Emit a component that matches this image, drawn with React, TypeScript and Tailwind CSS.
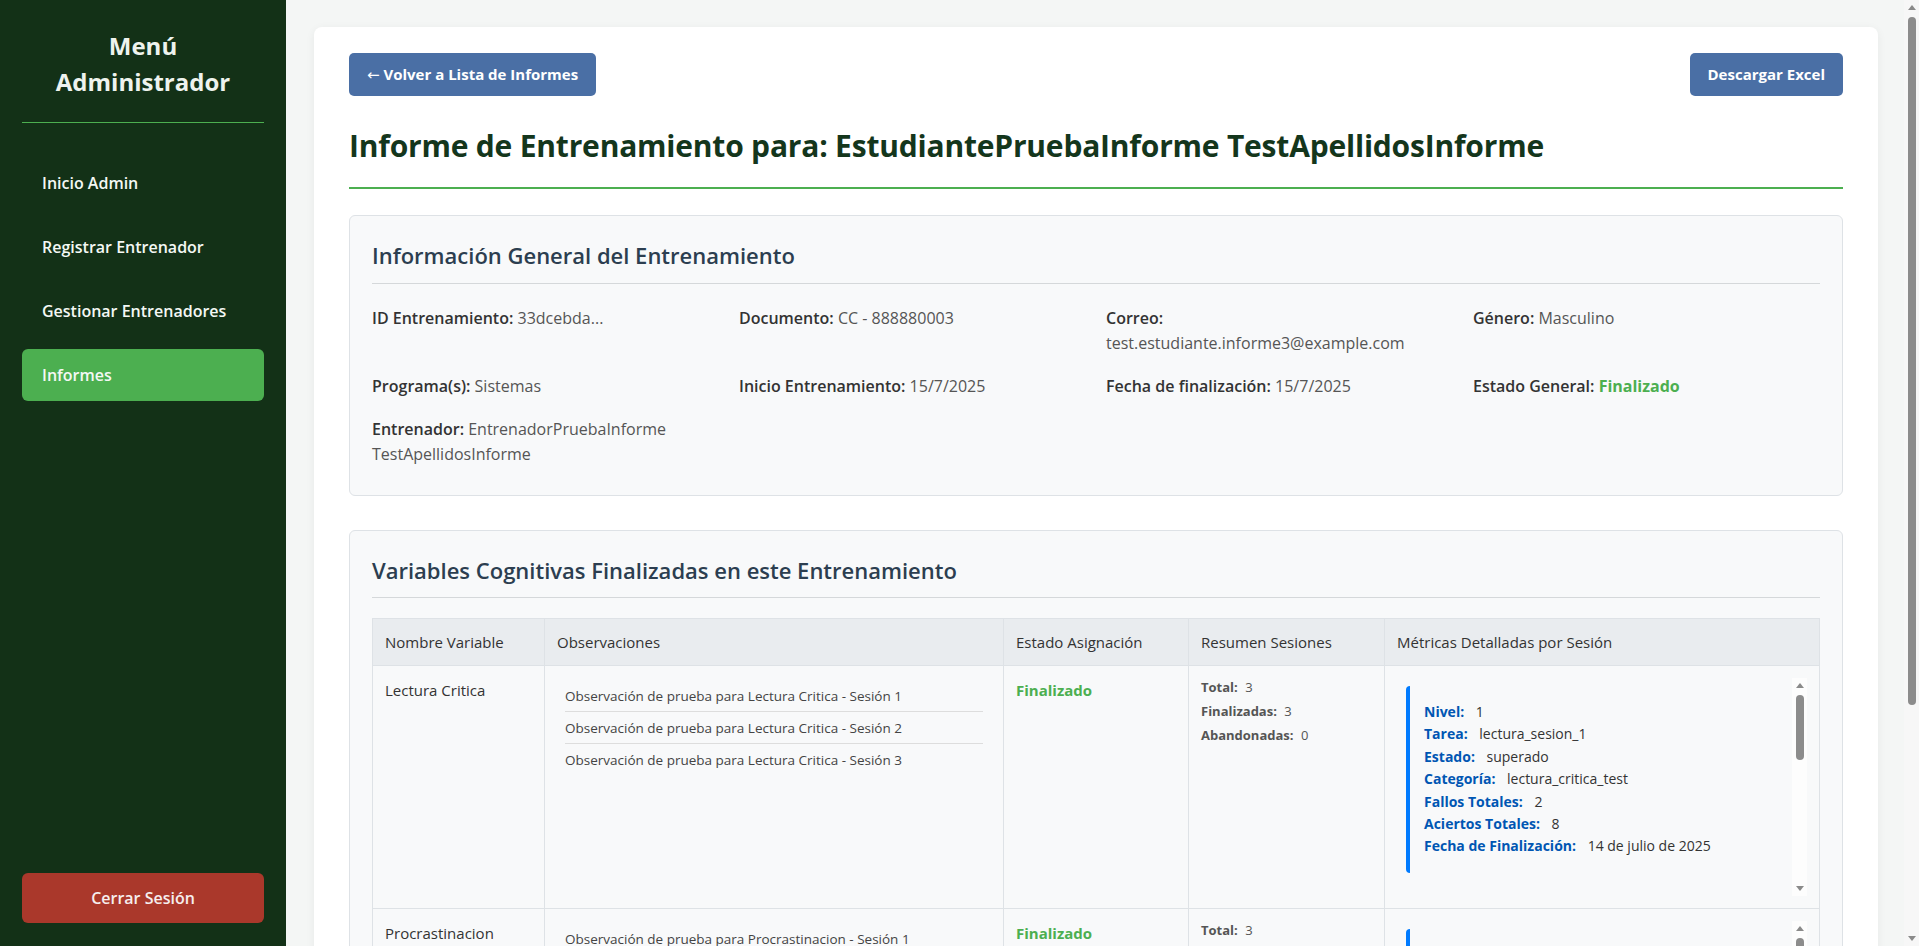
import React from 'react';

type Session = {
  nivel: string;
  tarea: string;
  estado: string;
  categoria: string;
  fallos: string;
  aciertos: string;
  fecha: string;
};

type Variable = {
  nombre: string;
  observaciones: string[];
  estado: string;
  total: number;
  finalizadas: number;
  abandonadas: number;
  sesion: Session;
};

const navItems = ['Inicio Admin', 'Registrar Entrenador', 'Gestionar Entrenadores', 'Informes'];

const variables: Variable[] = [
  {
    nombre: 'Lectura Critica',
    observaciones: [
      'Observación de prueba para Lectura Critica - Sesión 1',
      'Observación de prueba para Lectura Critica - Sesión 2',
      'Observación de prueba para Lectura Critica - Sesión 3',
    ],
    estado: 'Finalizado',
    total: 3,
    finalizadas: 3,
    abandonadas: 0,
    sesion: {
      nivel: '1',
      tarea: 'lectura_sesion_1',
      estado: 'superado',
      categoria: 'lectura_critica_test',
      fallos: '2',
      aciertos: '8',
      fecha: '14 de julio de 2025',
    },
  },
  {
    nombre: 'Procrastinacion',
    observaciones: [
      'Observación de prueba para Procrastinacion - Sesión 1',
      'Observación de prueba para Procrastinacion - Sesión 2',
      'Observación de prueba para Procrastinacion - Sesión 3',
    ],
    estado: 'Finalizado',
    total: 3,
    finalizadas: 3,
    abandonadas: 0,
    sesion: {
      nivel: '1',
      tarea: 'procrastinacion_sesion_1',
      estado: 'superado',
      categoria: 'procrastinacion_test',
      fallos: '3',
      aciertos: '7',
      fecha: '14 de julio de 2025',
    },
  },
];

// fake scrollbar (the headless browser hides the real ones)
function ScrollBar({ track, thumbTop, thumbHeight }: { track: string; thumbTop: number; thumbHeight: number }) {
  return (
    <div className={`w-[15px] shrink-0 h-full flex flex-col ${track}`}>
      <div className="h-[15px] flex items-center justify-center">
        <div className="w-0 h-0 border-x-[4px] border-x-transparent border-b-[5px] border-b-[#8a8a8a]" />
      </div>
      <div className="flex-1">
        <div className="w-[8px] mx-auto rounded-full bg-[#8c8c8c]" style={{ marginTop: thumbTop, height: thumbHeight }} />
      </div>
      <div className="h-[15px] flex items-center justify-center">
        <div className="w-0 h-0 border-x-[4px] border-x-transparent border-t-[5px] border-t-[#8a8a8a]" />
      </div>
    </div>
  );
}

function Sidebar() {
  return (
    <aside className="w-[286px] shrink-0 h-full bg-[#133117] flex flex-col px-[22px] pt-[28px] pb-[23px]">
      <h2 className="text-center text-[24px] leading-[36px] font-bold text-[#eef3ee] pb-[22px] border-b border-[#4caf50]">
        Menú
        <br />
        Administrador
      </h2>
      <nav className="mt-[34px] flex flex-col gap-[12px]">
        {navItems.map((item) => (
          <a
            key={item}
            href="#"
            className={
              item === 'Informes'
                ? 'h-[52px] flex items-center px-[20px] rounded-[6px] bg-[#4caf50] text-[16px] font-semibold text-[#f4f8f4]'
                : 'h-[52px] flex items-center px-[20px] rounded-[6px] text-[16px] font-semibold text-[#f4f8f4]'
            }
          >
            {item}
          </a>
        ))}
      </nav>
      <button className="mt-auto h-[50px] w-full rounded-[6px] bg-[#aa382b] text-[16px] font-semibold text-[#f6eeee]">
        Cerrar Sesión
      </button>
    </aside>
  );
}

function InfoItem({ label, children }: { label: string; children: React.ReactNode }) {
  return (
    <div className="text-[16px] leading-[25px] text-[#555]">
      <span className="font-semibold text-[#333]">{label}:</span> {children}
    </div>
  );
}

function SessionCard({ s }: { s: Session }) {
  const rows: [string, string][] = [
    ['Nivel', s.nivel],
    ['Tarea', s.tarea],
    ['Estado', s.estado],
    ['Categoría', s.categoria],
    ['Fallos Totales', s.fallos],
    ['Aciertos Totales', s.aciertos],
    ['Fecha de Finalización', s.fecha],
  ];
  return (
    <div className="border-l-4 border-[#007bff] rounded-[4px] pl-[14px] py-[15px]">
      {rows.map(([k, v]) => (
        <div key={k} className="text-[14px] leading-[22.4px] text-[#333]">
          <span className="font-bold text-[#0056b3] mr-[8px]">{k}:</span> {v}
        </div>
      ))}
    </div>
  );
}

function VariableRow({ v }: { v: Variable }) {
  return (
    <tr className="align-top">
      <td className="border border-[#dee2e6] p-[12px] text-[15px] leading-[24px] text-[#333]">{v.nombre}</td>
      <td className="border border-[#dee2e6] p-[12px]">
        <ul className="px-[8px] pt-[2px]">
          {v.observaciones.map((o, i) => (
            <li
              key={o}
              className={
                i < v.observaciones.length - 1
                  ? 'py-[5.5px] text-[13.5px] leading-[20px] text-[#444] border-b border-[#ddd]'
                  : 'py-[5.5px] text-[13.5px] leading-[20px] text-[#444]'
              }
            >
              {o}
            </li>
          ))}
        </ul>
      </td>
      <td className="border border-[#dee2e6] p-[12px] text-[15px] leading-[24px] font-bold text-[#4caf50]">{v.estado}</td>
      <td className="border border-[#dee2e6] p-[12px] text-[13px] leading-[18px] text-[#555]">
        <p className="mb-[6px]">
          <span className="font-bold mr-[4px]">Total:</span> {v.total}
        </p>
        <p className="mb-[6px]">
          <span className="font-bold mr-[4px]">Finalizadas:</span> {v.finalizadas}
        </p>
        <p>
          <span className="font-bold mr-[4px]">Abandonadas:</span> {v.abandonadas}
        </p>
      </td>
      <td className="border border-[#dee2e6] p-[12px]">
        <div className="h-[218px] flex">
          <div className="flex-1 overflow-hidden pl-[9px] pt-[8px] pr-[8px]">
            <SessionCard s={v.sesion} />
          </div>
          <ScrollBar track="bg-[#fdfdfd]" thumbTop={2} thumbHeight={65} />
        </div>
      </td>
    </tr>
  );
}

export default function App() {
  return (
    <div className="h-screen flex overflow-hidden font-['Open_Sans','Noto_Sans',sans-serif]">
      <Sidebar />
      <main className="flex-1 h-full overflow-hidden bg-[#f4f6f5] pl-[28px] pr-[26px] pt-[27px] pb-[28px]">
        <div className="bg-white rounded-[8px] shadow-[0_2px_10px_rgba(0,0,0,0.06)] px-[35px] pt-[26px] pb-[28px]">
          <div className="flex justify-between items-center">
            <button className="h-[43px] px-[18px] rounded-[5px] bg-[#4a6fa5] text-white text-[15px] font-bold">
              <span className="font-['DejaVu_Sans',sans-serif] font-normal">←</span> Volver a Lista de Informes
            </button>
            <button className="h-[43px] px-[18px] rounded-[5px] bg-[#4a6fa5] text-white text-[15px] font-bold">
              Descargar Excel
            </button>
          </div>

          <h1 className="mt-[30px] pb-[21px] border-b-2 border-[#4caf50] text-[30px] leading-[40px] tracking-[-0.2px] font-bold text-[#14361c]">
            Informe de Entrenamiento para: EstudiantePruebaInforme TestApellidosInforme
          </h1>

          <section className="mt-[26px] bg-[#f8f9fa] border border-[#dee2e6] rounded-[6px] px-[22px] pt-[24px] pb-[28px]">
            <h3 className="pb-[13px] border-b border-[#d5d8da] text-[22px] leading-[30px] font-semibold text-[#2c3e50]">
              Información General del Entrenamiento
            </h3>
            <div className="mt-[22px] grid grid-cols-4 gap-x-[20px] gap-y-[18px]">
              <InfoItem label="ID Entrenamiento">33dcebda...</InfoItem>
              <InfoItem label="Documento">CC - 888880003</InfoItem>
              <InfoItem label="Correo">
                <br />
                test.estudiante.informe3@example.com
              </InfoItem>
              <InfoItem label="Género">Masculino</InfoItem>
              <InfoItem label="Programa(s)">Sistemas</InfoItem>
              <InfoItem label="Inicio Entrenamiento">15/7/2025</InfoItem>
              <InfoItem label="Fecha de finalización">15/7/2025</InfoItem>
              <InfoItem label="Estado General">
                <span className="font-bold text-[#4caf50]">Finalizado</span>
              </InfoItem>
              <InfoItem label="Entrenador">
                EntrenadorPruebaInforme
                <br />
                TestApellidosInforme
              </InfoItem>
            </div>
          </section>

          <section className="mt-[34px] bg-[#f8f9fa] border border-[#dee2e6] rounded-[6px] px-[22px] pt-[24px] pb-[24px]">
            <h3 className="pb-[12px] border-b border-[#d5d8da] text-[22px] leading-[30px] font-semibold text-[#2c3e50]">
              Variables Cognitivas Finalizadas en este Entrenamiento
            </h3>
            <table className="mt-[20px] w-full border-collapse table-fixed">
              <colgroup>
                <col className="w-[172px]" />
                <col className="w-[459px]" />
                <col className="w-[185px]" />
                <col className="w-[196px]" />
                <col />
              </colgroup>
              <thead>
                <tr className="bg-[#e9ecef]">
                  {['Nombre Variable', 'Observaciones', 'Estado Asignación', 'Resumen Sesiones', 'Métricas Detalladas por Sesión'].map(
                    (h) => (
                      <th
                        key={h}
                        className="h-[47px] border border-[#dee2e6] px-[12px] text-left text-[15px] font-normal text-[#333]"
                      >
                        {h}
                      </th>
                    ),
                  )}
                </tr>
              </thead>
              <tbody>
                {variables.map((v) => (
                  <VariableRow key={v.nombre} v={v} />
                ))}
              </tbody>
            </table>
          </section>
        </div>
      </main>
      <ScrollBar track="bg-[#f7f7f7]" thumbTop={2} thumbHeight={688} />
    </div>
  );
}
